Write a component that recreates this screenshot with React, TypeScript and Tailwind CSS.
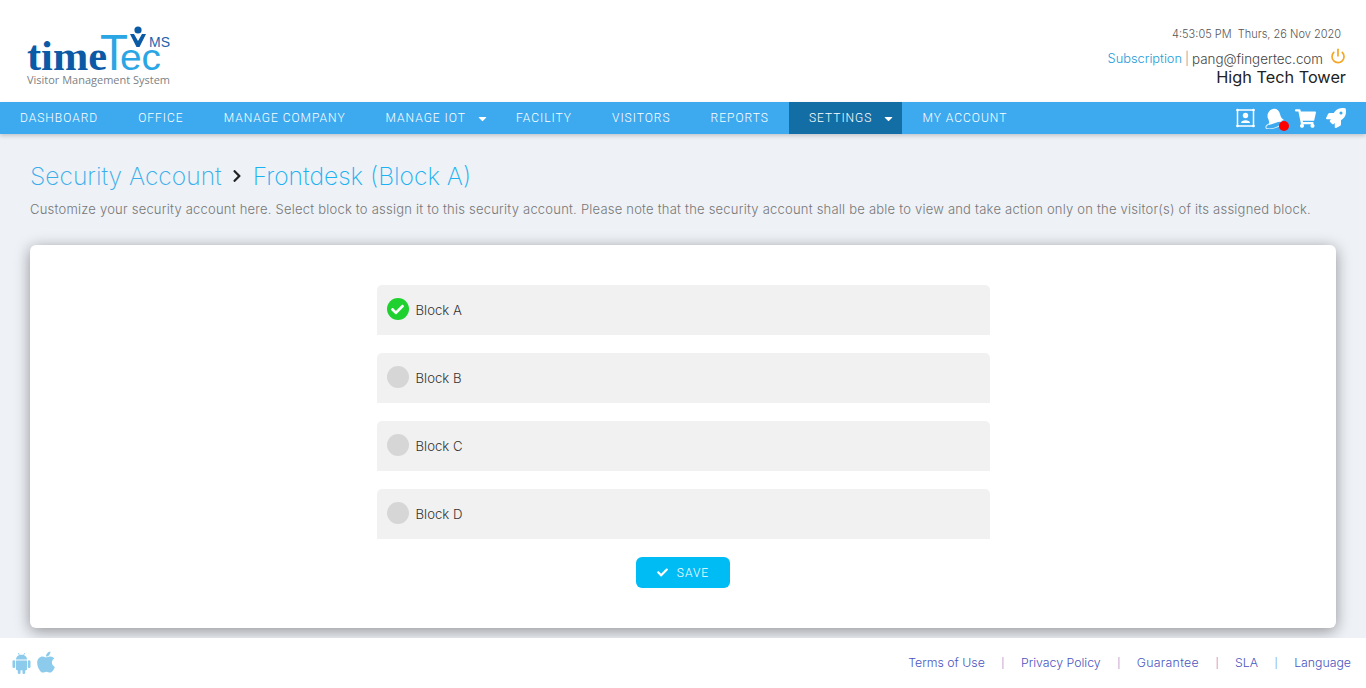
import React from "react";
import { FaApple, FaCheck, FaRocket, FaShoppingCart, FaCaretDown, FaChevronRight } from "react-icons/fa";
import { Power } from "lucide-react";

const sans = "font-['Inter','Noto_Sans',sans-serif]";

const NavItem = ({ label, caret, active }: { label: string; caret?: boolean; active?: boolean }) => (
  <div className={`flex h-full items-center pl-5 ${caret ? "pr-[7px]" : "pr-5"} ${active ? "bg-[#146ea6]" : ""}`}>
    <span className="whitespace-nowrap">{label}</span>
    {caret && <FaCaretDown className="ml-[10px] text-[13px] text-white" />}
  </div>
);

const Logo = () => (
  <svg width="160" height="72" viewBox="0 0 160 72" className="block">
    <text x="15" y="53" textLength="80" lengthAdjust="spacingAndGlyphs" fontFamily="Liberation Serif" fontWeight="700" fontSize="42" fill="#0b5aa6">
      time
    </text>
    <text x="88" y="53" textLength="28" lengthAdjust="spacingAndGlyphs" fontFamily="Liberation Sans" fontSize="50" fill="#2ba6e4">
      T
    </text>
    <text x="108" y="53" textLength="41" lengthAdjust="spacingAndGlyphs" fontFamily="Liberation Sans" fontSize="37" fill="#2ba6e4">
      ec
    </text>
    <circle cx="126" cy="13" r="3.6" fill="#0b5aa6" />
    <path d="M118 17 L122 17 L126 24 L130 17 L134 17 L127.5 30 L124.5 30 Z" fill="#0b5aa6" />
    <text x="137" y="30" textLength="21" lengthAdjust="spacingAndGlyphs" fontFamily="Liberation Sans" fontSize="14" fill="#1f63ad">
      MS
    </text>
    <text x="15" y="67" textLength="143" lengthAdjust="spacingAndGlyphs" fontFamily="Open Sans" fontWeight="500" fontSize="10.5" fill="#7b7f85">
      Visitor Management System
    </text>
  </svg>
);

const ContactIcon = () => (
  <svg width="19" height="20" viewBox="0 0 19 20" fill="none">
    <rect x="1.5" y="2" width="16" height="16" stroke="#fff" strokeWidth="1.5" />
    <circle cx="1.5" cy="2" r="1.3" fill="#fff" />
    <circle cx="17.5" cy="2" r="1.3" fill="#fff" />
    <circle cx="1.5" cy="18" r="1.3" fill="#fff" />
    <circle cx="17.5" cy="18" r="1.3" fill="#fff" />
    <circle cx="9.5" cy="7.5" r="2.7" fill="#fff" />
    <path d="M5 15 C5 11.2 14 11.2 14 15 Z" fill="#fff" />
  </svg>
);

const BellIcon = () => (
  <svg width="20" height="21" viewBox="0 0 20 21" fill="none">
    <path d="M8 1 C11 0 14 2 15 6 C15.6 9 17 11 19 12 L4 17 C4.6 14.6 4 12.6 2.8 10 C1.6 6 4 2 8 1 Z" fill="#fff" />
    <ellipse cx="9" cy="17" rx="8.5" ry="3" transform="rotate(-18 9 17)" stroke="#fff" strokeWidth="1" opacity="0.8" />
  </svg>
);

const AndroidIcon = () => (
  <svg width="19" height="22" viewBox="0 0 19 22" fill="currentColor">
    <path d="M4 7.5 C4 4.6 6.4 2.8 9.5 2.8 C12.6 2.8 15 4.6 15 7.5 Z" />
    <path d="M6.2 1 L7.6 3.4 M12.8 1 L11.4 3.4" stroke="currentColor" strokeWidth="0.8" />
    <path d="M4 8.4 H15 V17 C15 17.8 14.4 18.2 13.8 18.2 H5.2 C4.6 18.2 4 17.8 4 17 Z" />
    <rect x="0.5" y="8.2" width="2.7" height="7.8" rx="1.35" />
    <rect x="15.8" y="8.2" width="2.7" height="7.8" rx="1.35" />
    <rect x="5.8" y="17" width="2.7" height="5" rx="1.35" />
    <rect x="10.5" y="17" width="2.7" height="5" rx="1.35" />
  </svg>
);

const Row = ({ label, on }: { label: string; on?: boolean }) => (
  <div className="flex h-[50px] items-center rounded-t-[5px] bg-[#f1f1f1] pl-[10px] text-[13.2px] font-light text-[#333]">
    {on ? (
      <span className="flex h-[22px] w-[22px] -translate-y-px items-center justify-center rounded-full bg-[#1fd12f]">
        <FaCheck className="text-[13px] text-white" />
      </span>
    ) : (
      <span className="h-[22px] w-[22px] -translate-y-px rounded-full bg-[#d6d6d6]" />
    )}
    <span className="ml-[7px] translate-y-px">{label}</span>
  </div>
);

const FootLink = ({ label, wide }: { label: string; wide?: boolean }) => (
  <span className={`whitespace-nowrap text-[#4a55c0] ${wide ? "tracking-[0.3px]" : ""}`}>{label}</span>
);
const Sep = () => <span className="mx-[16.5px] text-[10px] text-[#5a86d0]">|</span>;

export default function App() {
  return (
    <div className={`${sans} flex h-[688px] w-[1366px] flex-col overflow-hidden bg-[#eef1f6]`}>
      <header className="flex h-[102px] justify-between bg-white">
        <div className="pl-[12px] pt-[17px]">
          <Logo />
        </div>
        <div className="flex flex-col items-end pr-5 pt-[26px] font-light">
          <div className="mr-[5px] text-[11px] leading-[17px] text-[#555]">4:53:05 PM&nbsp; Thurs, 26 Nov 2020</div>
          <div className="mt-[7px] flex h-[18px] items-center text-[12.8px]">
            <span className="text-[#1b9bd8]">Subscription</span>
            <span className="mx-[3px] text-[#999]">|</span>
            <span className="text-[13.4px] text-[#444]">pang@fingertec.com</span>
            <Power className="mb-[6px] ml-[7px] text-[#f5a623]" size={16} strokeWidth={2.5} />
          </div>
          <div className="mt-[-2px] text-[16.3px] font-normal leading-[22px] text-[#222]">High Tech Tower</div>
        </div>
      </header>

      <nav className="flex h-[32px] items-center justify-between bg-[#3daaef] pr-[20px] font-['Roboto',sans-serif] text-[12px] font-light tracking-[1px] text-white shadow-[0_2px_4px_rgba(0,0,0,0.18)]">
        <div className="flex h-full">
          <NavItem label="DASHBOARD" />
          <NavItem label="OFFICE" />
          <NavItem label="MANAGE COMPANY" />
          <NavItem label="MANAGE IOT" caret />
          <NavItem label="FACILITY" />
          <NavItem label="VISITORS" />
          <NavItem label="REPORTS" />
          <NavItem label="SETTINGS" caret active />
          <NavItem label="MY ACCOUNT" />
        </div>
        <div className="flex items-center gap-[10px]">
          <ContactIcon />
          <span className="relative">
            <BellIcon />
            <span className="absolute bottom-[-2px] right-[-4px] h-[10px] w-[10px] rounded-full bg-[#f00]" />
          </span>
          <FaShoppingCart className="text-[21px]" />
          <FaRocket className="text-[20px]" />
        </div>
      </nav>

      <main className="flex flex-1 flex-col px-[30px]">
        <h1 className="mt-[26px] flex items-center text-[24.6px] font-extralight leading-[32px] text-[#19b2f2]">
          <span className="text-[#3aaeea]">Security Account</span>
          <FaChevronRight className="mx-[8.5px] text-[14px] text-[#222]" />
          <span>Frontdesk (Block A)</span>
        </h1>
        <p className="mt-[8px] whitespace-nowrap text-[13px] font-light leading-[18px] tracking-[0.22px] text-[#777]">
          Customize your security account here. Select block to assign it to this security account. Please note that the security account shall be able to view and take action only on the visitor(s) of its assigned block.
        </p>
        <section className="mt-[27px] flex h-[383px] flex-col items-center rounded-[6px] bg-white pt-[40px] shadow-[0_3px_15px_rgba(0,0,0,0.4)]">
          <div className="flex w-[613px] flex-col gap-[18px]">
            <Row label="Block A" on />
            <Row label="Block B" />
            <Row label="Block C" />
            <Row label="Block D" />
          </div>
          <button className="mt-[18px] flex h-[31px] w-[94px] items-center justify-center gap-[9px] rounded-[6px] bg-[#00bcf5] font-['Roboto',sans-serif] text-[12px] font-light tracking-[1px] text-white">
            <FaCheck className="text-[11px]" />
            SAVE
          </button>
        </section>
      </main>

      <footer className="flex h-[50px] items-center justify-between bg-white pl-[12px] pr-[15px] text-[12.3px] font-light">
        <div className="flex items-center gap-[3px] text-[#8ccbec]">
          <AndroidIcon />
          <FaApple className="mb-[2px] text-[24px]" />
        </div>
        <div className="flex items-center">
          <FootLink label="Terms of Use" />
          <Sep />
          <FootLink label="Privacy Policy" />
          <Sep />
          <FootLink label="Guarantee" wide />
          <Sep />
          <FootLink label="SLA" />
          <Sep />
          <FootLink label="Language" />
        </div>
      </footer>
    </div>
  );
}
